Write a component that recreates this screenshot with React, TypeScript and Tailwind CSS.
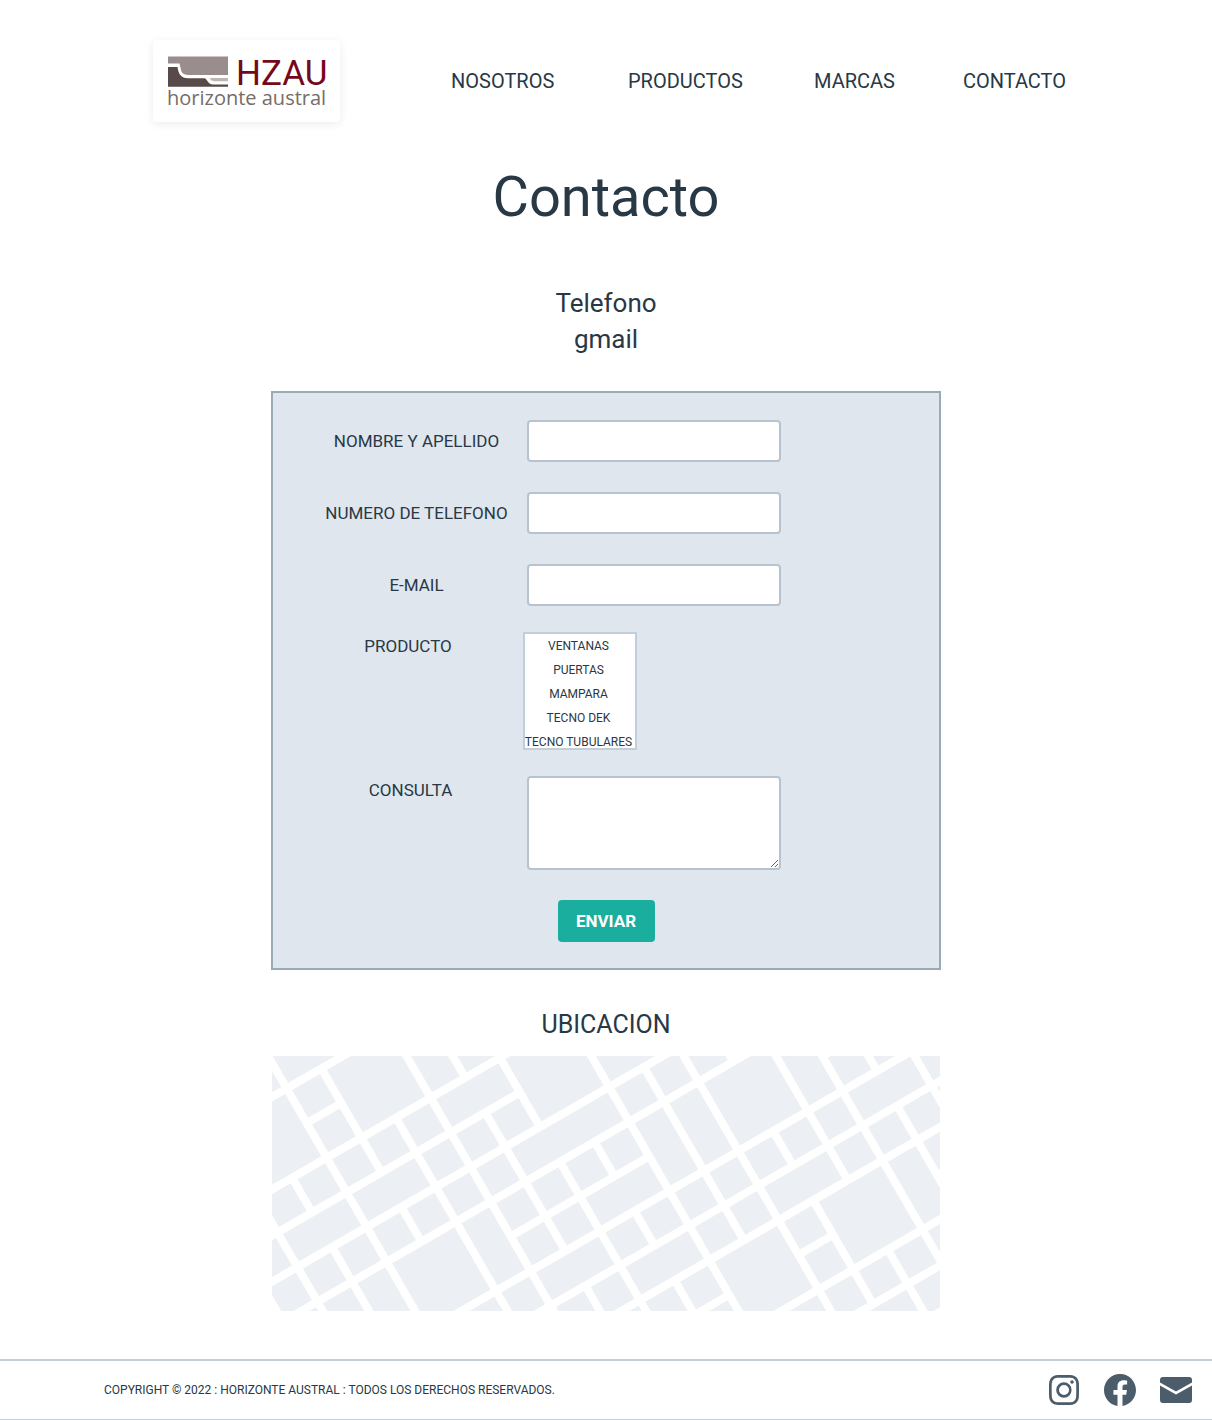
import { BsInstagram, BsFacebook } from "react-icons/bs";

const BLOCK_COLOR = "#eceff4";
const CELL = 40;
const ROAD = 8;

// Larger city blocks: [column, row, columns spanned, rows spanned]
const mergedBlocks: [number, number, number, number][] = [
  [0, 0, 2, 1], [1, 1, 2, 2], [-2, 1, 2, 2], [3, 1, 1, 2], [3, 3, 2, 1],
  [0, 4, 2, 1], [-2, 4, 2, 1], [5, 3, 2, 2], [7, 4, 2, 1], [4, 5, 3, 1],
  [-1, 6, 1, 2], [0, 6, 2, 2], [2, 6, 1, 2], [5, 7, 2, 1], [7, 6, 1, 2],
  [8, 6, 1, 2], [9, 6, 2, 2], [11, 6, 1, 2], [3, 8, 2, 1], [12, 8, 2, 1],
  [5, 9, 2, 1], [9, 9, 2, 1], [7, 10, 2, 2], [10, 10, 2, 2], [12, 10, 1, 2],
  [9, 13, 2, 1],
];

function buildBlocks() {
  const taken = new Set<string>();
  const blocks = [...mergedBlocks];
  mergedBlocks.forEach(([c, r, w, h]) => {
    for (let i = c; i < c + w; i++) for (let j = r; j < r + h; j++) taken.add(`${i},${j}`);
  });
  for (let i = -4; i < 16; i++) {
    for (let j = -1; j < 15; j++) {
      const x = 0.866 * (16.5 + 40 * i) + 0.5 * (15.5 + 40 * j);
      const y = -0.5 * (16.5 + 40 * i) + 0.866 * (15.5 + 40 * j);
      const near = x > -30 && x < 698 && y > -30 && y < 285;
      if (near && !taken.has(`${i},${j}`)) blocks.push([i, j, 1, 1]);
    }
  }
  return blocks;
}

const blocks = buildBlocks();

function StreetMap() {
  return (
    <svg viewBox="0 0 668 255" className="block w-full" role="img" aria-label="Mapa">
      <g transform="rotate(-30)" fill={BLOCK_COLOR}>
        {blocks.map(([c, r, w, h]) => (
          <rect
            key={`${c},${r}`}
            x={c * CELL - 3.5 + ROAD / 2}
            y={r * CELL - 4.5 + ROAD / 2}
            width={w * CELL - ROAD}
            height={h * CELL - ROAD}
          />
        ))}
      </g>
    </svg>
  );
}

function Logo() {
  return (
    <a
      href="#inicio"
      aria-label="HZAU horizonte austral"
      className="block rounded bg-white px-[15px] pt-[14px] pb-[13px] shadow-[0_2px_10px_rgba(0,0,0,0.08)]"
    >
      <svg width="157" height="55" viewBox="0 0 157 55" className="overflow-visible">
        <path d="M0 2.500h60v18.500H22c-7 0-8.500-2-9.300-6.500L11.500 9.500H0z" fill="#9a8d8d" />
        <path d="M0 13h9.500c1 7 3.500 11.300 10.500 11.300h16.500C39 24.300 39.500 30.500 45 30.500h15v2.300H0z" fill="#574a48" />
        <path d="M41.500 24h18.500v3.200H46c-3 0-3-1.700-4.500-3.200z" fill="#bcb7b6" />
        <text x="68" y="31" fontSize="35" fill="#74091b" fontFamily="Roboto, sans-serif">HZAU</text>
        <text x="-1" y="51" fontSize="20" fill="#766c68" fontFamily="'Open Sans', sans-serif">horizonte austral</text>
      </svg>
    </a>
  );
}

const navItems = ["NOSOTROS", "PRODUCTOS", "MARCAS", "CONTACTO"];
const products = ["VENTANAS", "PUERTAS", "MAMPARA", "TECNO DEK", "TECNO TUBULARES"];
const fields = [
  { id: "nombre", label: "NOMBRE Y APELLIDO", type: "text" },
  { id: "telefono", label: "NUMERO DE TELEFONO", type: "tel" },
  { id: "email", label: "E-MAIL", type: "email" },
];

export default function App() {
  return (
    <div className="bg-white font-['Roboto',sans-serif] text-[#283845]">
      <header className="mx-auto flex max-w-[906px] items-center justify-between pt-10">
        <Logo />
        <nav className="grid w-[608px] grid-cols-[177px_186px_149px_auto] text-xl">
          {navItems.map((item) => (
            <a key={item} href={`#${item.toLowerCase()}`}>{item}</a>
          ))}
        </nav>
      </header>

      <main className="mx-auto max-w-[670px] text-center">
        <h1 className="mt-9 text-[56px] leading-[78px]">Contacto</h1>
        <div className="mt-[49px] text-[26px] leading-9">
          <p>Telefono</p>
          <p>gmail</p>
        </div>

        <form
          className="mt-[34px] border-2 border-[#9aabb8] bg-[#dfe6ee] pt-[27px] pb-[26px] pl-9 text-[17px] leading-7"
          onSubmit={(e) => e.preventDefault()}
        >
          {fields.map((f) => (
            <div key={f.id} className="mb-[30px] flex items-center">
              <label htmlFor={f.id} className="w-[215px]">{f.label}</label>
              <input
                id={f.id}
                type={f.type}
                className="ml-[3px] h-[42px] w-[254px] rounded border-2 border-[#b7c4cf] bg-white px-3"
              />
            </div>
          ))}
          <div className="-mt-1 flex items-start">
            <label htmlFor="producto" className="w-[214px] pr-4">PRODUCTO</label>
            <select
              id="producto"
              multiple
              size={5}
              className="h-[118px] w-[114px] appearance-none overflow-hidden border-2 border-[#c3ced9] bg-white p-0 text-center text-xs"
            >
              {products.map((p) => (
                <option key={p} className="flex h-6 items-center justify-center p-0 pr-[3px]">{p}</option>
              ))}
            </select>
          </div>
          <div className="mt-[26px] flex items-start">
            <label htmlFor="consulta" className="w-[215px] pr-3">CONSULTA</label>
            <textarea
              id="consulta"
              className="ml-[3px] h-[94px] w-[254px] rounded border-2 border-[#b7c4cf] bg-white px-3"
            />
          </div>
          <button
            type="submit"
            className="mt-[30px] mr-9 h-[42px] w-[97px] rounded bg-[#1aae9f] font-bold text-white"
          >
            ENVIAR
          </button>
        </form>

        <h2 className="mt-9 text-[25px] leading-[38px]">UBICACION</h2>
        <div className="mt-3 overflow-hidden rounded px-px">
          <StreetMap />
        </div>
      </main>

      <footer className="mt-12 flex h-[61px] items-center justify-between border-t-2 border-b border-t-[#c3cfd9] border-b-[#c3cfd9] pr-5 pl-[104px]">
        <p className="text-xs">COPYRIGHT © 2022 : HORIZONTE AUSTRAL : TODOS LOS DERECHOS RESERVADOS.</p>
        <div className="flex items-center gap-6 text-[#4b5c6b]">
          <a href="#instagram" aria-label="Instagram" className="flex w-8 justify-center"><BsInstagram size={30} /></a>
          <a href="#facebook" aria-label="Facebook"><BsFacebook size={32} /></a>
          <a href="#correo" aria-label="Correo">
            <svg width="32" height="32" viewBox="0 0 32 32" fill="currentColor">
              <path d="M3 3h26a3 3 0 0 1 3 3v2.500L16 17.500 0 8.500V6a3 3 0 0 1 3-3z" />
              <path d="M0 11.500 16 20.500l16-9V26a3 3 0 0 1-3 3H3a3 3 0 0 1-3-3z" />
            </svg>
          </a>
        </div>
      </footer>
    </div>
  );
}
